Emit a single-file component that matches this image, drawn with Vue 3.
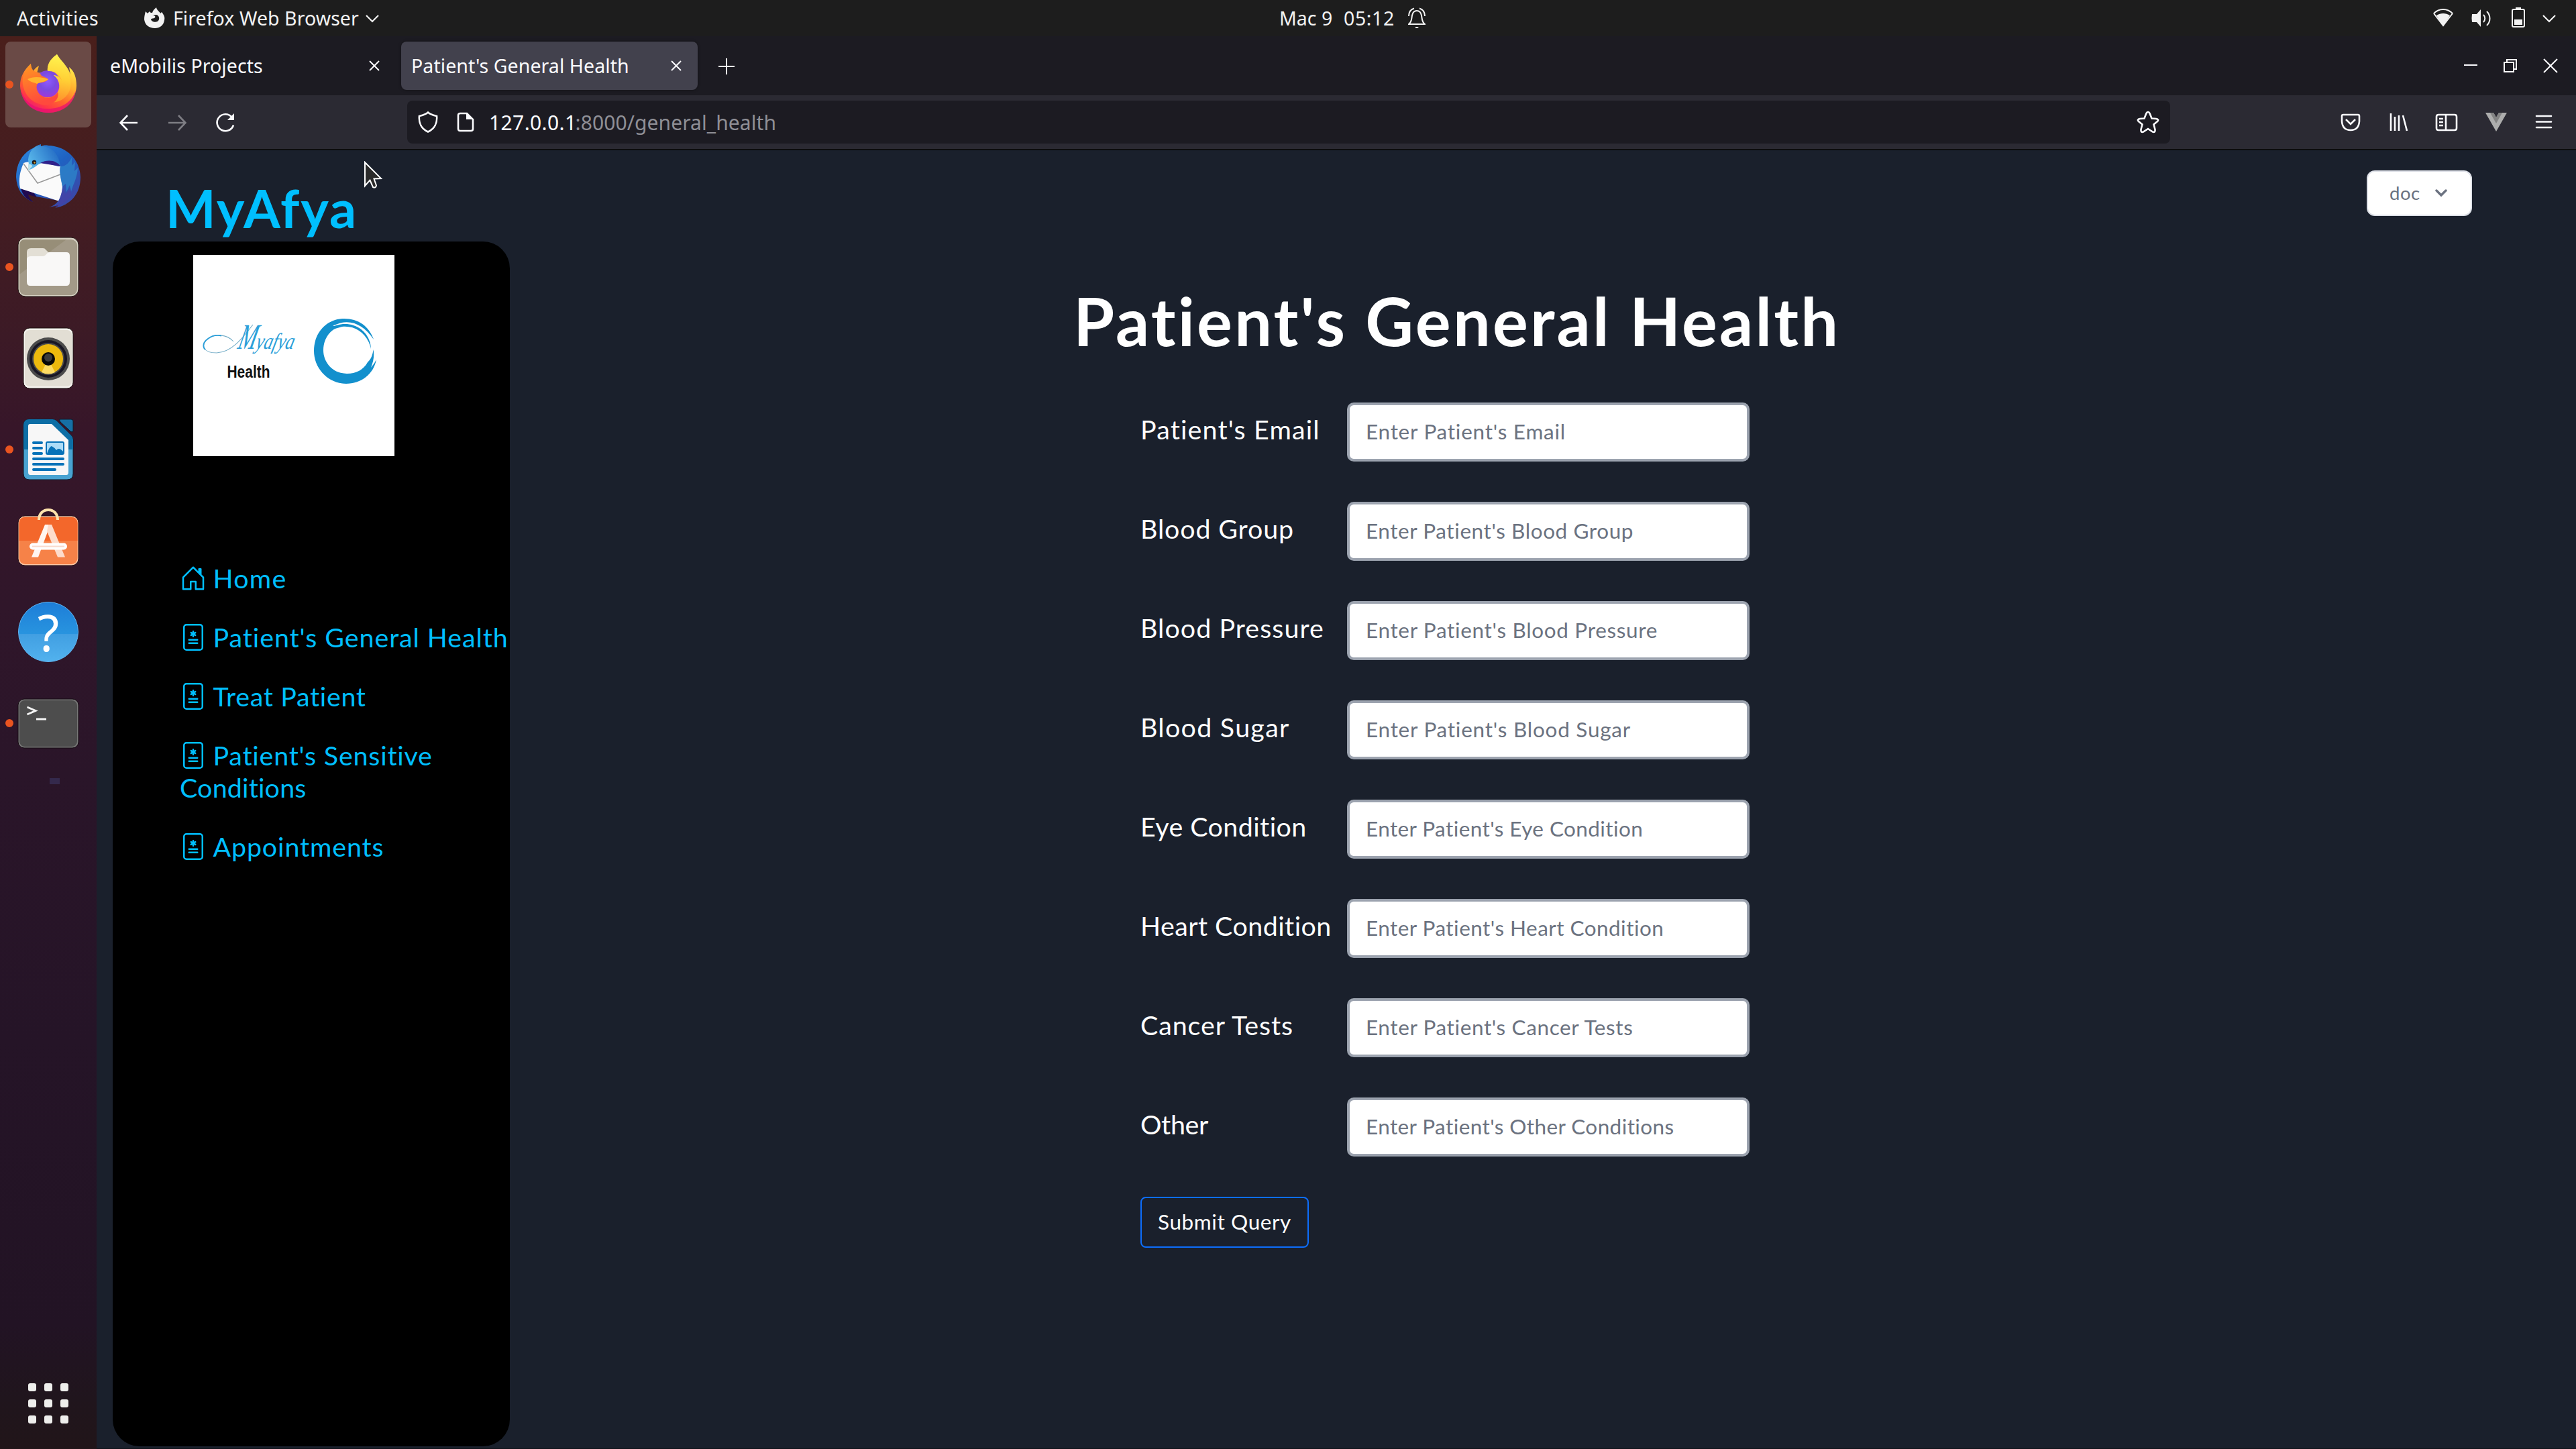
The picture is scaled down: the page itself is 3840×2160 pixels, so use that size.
<script setup>
const fields = [
  { label: "Patient's Email", lw: 262, hint: "Enter Patient's Email", hw: 295 },
  { label: 'Blood Group', lw: 224, hint: "Enter Patient's Blood Group", hw: 397 },
  { label: 'Blood Pressure', lw: 269, hint: "Enter Patient's Blood Pressure", hw: 433 },
  { label: 'Blood Sugar', lw: 219, hint: "Enter Patient's Blood Sugar", hw: 394 },
  { label: 'Eye Condition', lw: 243, hint: "Enter Patient's Eye Condition", hw: 411 },
  { label: 'Heart Condition', lw: 280, hint: "Enter Patient's Heart Condition", hw: 442 },
  { label: 'Cancer Tests', lw: 227, hint: "Enter Patient's Cancer Tests", hw: 398 },
  { label: 'Other', lw: 101, hint: "Enter Patient's Other Conditions", hw: 459 },
]

const links = [
  { icon: 'home', lines: [['Home', 105]] },
  { icon: 'file', lines: [["Patient's General Health", 435]] },
  { icon: 'file', lines: [['Treat Patient', 228]] },
  { icon: 'file', lines: [["Patient's Sensitive", 324], ['Conditions', 187]] },
  { icon: 'file', lines: [['Appointments', 253]] },
]

// Tracks a label out or in so that its ink spans the given width.
const vFit = {
  mounted(el, { value }) {
    const text = el.placeholder || el.textContent.trim()
    const cs = getComputedStyle(el)
    const ctx = document.createElement('canvas').getContext('2d')
    ctx.font = `${cs.fontWeight} ${cs.fontSize} ${cs.fontFamily}`
    const m = ctx.measureText(text)
    const ink = m.actualBoundingBoxLeft + m.actualBoundingBoxRight
    el.style.letterSpacing = `${(value - ink) / (text.length - 1)}px`
  },
}
</script>

<template>
  <div class="screen">
    <header class="topbar">
      <div class="top-left">
        <span v-fit="121" class="activities">Activities</span>
        <svg class="ff-mono" width="34" height="32" viewBox="0 0 34 32">
          <path d="M4 6 L7 9 L10 6 C11 8 12 8 14 8 C15 4 18 2 20 0 C21 5 25 6 26 9 L28 7 C32 12 33 15 32 19 C31 27 25 31 18 31 C9 31 3 26 2 18 C2 13 3 10 4 6 Z M14 12 C18 12 20 14 17 16 C14 17 13 16 12 18 C13 22 22 24 24 18 C25 14 22 11 20 11 Z" fill="#f2f2f2" fill-rule="evenodd" />
        </svg>
        <span v-fit="275">Firefox Web Browser</span>
        <svg class="chev" width="22" height="14" viewBox="0 0 22 14"><path d="M2 2 L11 11 L20 2" /></svg>
      </div>
      <span v-fit="76" class="date">Mac 9</span>
      <span v-fit="73" class="time">05:12</span>
      <svg class="bell" width="26" height="32" viewBox="0 0 26 32" fill="none" stroke="#f2f2f2" stroke-width="2">
        <path d="M1 13 C1 7 4 3 9 1.5 M25 13 C25 7 22 3 17 1.5" />
        <path d="M1 25 C6 21 5 17 6 12 C7 7 9 5 13 5 C17 5 19 7 20 12 C21 17 20 21 25 25 Z" />
        <path d="M10 29 h6 l-2 2 h-2 Z" fill="#f2f2f2" stroke="none" />
      </svg>
      <div class="tray">
        <svg width="30" height="28" viewBox="0 0 30 28">
          <path d="M1 7 C9 -1 21 -1 29 7" fill="none" stroke="#f2f2f2" stroke-width="2" />
          <path d="M1 7 L15 25 L29 7" fill="none" stroke="#f2f2f2" stroke-width="2" />
          <path d="M5 10 C11 6 19 6 25 10 L15 26 Z" fill="#f2f2f2" />
        </svg>
        <svg class="speaker" width="30" height="28" viewBox="0 0 30 28" fill="none" stroke="#f2f2f2" stroke-width="2">
          <path d="M1 8 h7 l6 -7 v26 l-6 -7 h-7 q-1 -6 0 -12 Z" fill="#f2f2f2" stroke="none" />
          <path d="M18 9 C21 12 21 17 18 20 M23 4 C29 10 29 19 23 25" />
        </svg>
        <svg class="battery" width="20" height="32" viewBox="0 0 20 32">
          <path d="M6 1 h8 v2 h-8 Z M4 19 h12 v8 h-12 Z" fill="#f2f2f2" />
          <rect x="1" y="4" width="18" height="26" rx="2" fill="none" stroke="#f2f2f2" stroke-width="2" />
        </svg>
        <svg class="chev tray-chev" width="22" height="14" viewBox="0 0 22 14"><path d="M2 2 L11 11 L20 2" /></svg>
      </div>
    </header>

    <div class="desktop">
      <aside class="dock">
        <div class="slot active running">
          <svg width="96" height="96" viewBox="0 0 96 96">
            <defs>
              <linearGradient id="ffBody" x1="0.8" y1="0.1" x2="0.3" y2="1">
                <stop offset="0" stop-color="#fff44f" /><stop offset="0.35" stop-color="#ffb02e" />
                <stop offset="0.62" stop-color="#ff6a2b" /><stop offset="0.85" stop-color="#ff3647" />
                <stop offset="1" stop-color="#e31587" />
              </linearGradient>
              <radialGradient id="ffGlobe" cx="0.5" cy="0.4" r="0.65">
                <stop offset="0" stop-color="#9059ff" /><stop offset="0.5" stop-color="#7a4be0" /><stop offset="1" stop-color="#a535d8" />
              </radialGradient>
              <linearGradient id="ffHead" x1="0" y1="0" x2="0.3" y2="1">
                <stop offset="0" stop-color="#ff9a1f" /><stop offset="1" stop-color="#ff4a3d" />
              </linearGradient>
              <linearGradient id="ffFlame" x1="0.4" y1="0" x2="0.3" y2="1">
                <stop offset="0" stop-color="#fff44f" /><stop offset="0.5" stop-color="#ffcf35" /><stop offset="1" stop-color="#ff8a2b" />
              </linearGradient>
            </defs>
            <path d="M22 17 C11 27 6 37 6 50 C7 73 25 90 48 90 C71 90 89 74 90 50 C90 38 87 28 79 22 L81 33 C77 20 66 12 61 3 C50 11 46 20 47 29 L31 31 L34 20 C30 22 27 25 26 28 C23 25 22 21 22 17 Z" fill="url(#ffBody)" />
            <path d="M7 56 C14 78 32 85 48 84 C68 84 83 74 89 57 C86 78 70 90 48 90 C26 90 9 76 7 56 Z" fill="#e8106f" opacity="0.75" />
            <ellipse cx="47" cy="47" rx="19" ry="20" fill="url(#ffGlobe)" />
            <path d="M61 3 C49 11 46 20 47 28 C58 27 66 33 68 42 C64 36 60 34 56 34 C66 42 67 55 59 63 C55 68 45 69 38 66 C50 82 76 74 81 53 C83 40 77 25 68 15 C64 11 62 7 61 3 Z" fill="url(#ffFlame)" />
            <path d="M22 17 C22 22 24 26 27 28 C31 30 35 29 38 35 C42 37 46 38 48 40 C46 44 38 45 33 46 C28 50 31 60 38 65 C46 71 58 67 62 59 C66 70 53 81 39 78 C17 74 8 54 10 38 C13 29 17 22 22 17 Z" fill="url(#ffHead)" />
            <path d="M17 40 C25 35 40 37 48 40 C45 44 36 44 31 47 C28 45 22 45 17 40 Z" fill="#ffb52e" />
          </svg>
        </div>
        <div class="slot">
          <svg width="96" height="96" viewBox="0 0 96 96">
            <defs>
              <linearGradient id="tbBlue" x1="0" y1="0" x2="0.8" y2="1">
                <stop offset="0" stop-color="#2d8be0" /><stop offset="0.5" stop-color="#1f62c2" /><stop offset="1" stop-color="#3c45a5" />
              </linearGradient>
              <linearGradient id="tbHead" x1="0" y1="0.6" x2="1" y2="0.2">
                <stop offset="0" stop-color="#58b7ea" /><stop offset="1" stop-color="#1e63c0" />
              </linearGradient>
            </defs>
            <path d="M37 1 C33 3 30 4 27 6 C10 13 0 30 0 50 C1 68 9 80 25 87 C20 82 18 79 17 75 L30 79 L63 85 C60 90 55 93 49 95 C57 94 60 92 63 92 C62 94 60 95 58 96 C81 92 96 75 96 50 C95 23 75 4 48 3 C43 2 40 3 37 4 Z" fill="url(#tbBlue)" />
            <path d="M7 67 C10 77 15 83 25 87 C21 82 19 80 18 76 L31 80 L26 73 Z" fill="#210a50" />
            <path d="M11 29 C20 26 30 27 38 29 L66 33 C64 44 67 50 69 64 C69 72 66 80 63 85.500 L6 67 C3 54 6 41 11 29 Z" fill="#fafafa" />
            <path d="M11 30 L32 59 L66 46" fill="none" stroke="#9a9a9a" stroke-width="1.600" />
            <path d="M37 1 C25 4 19 13 18 24 L20 39 C29 36 31 31 38 29 C48 28 58 34 66 34 C64 18 56 6 40 4 L32 4 Z" fill="url(#tbHead)" />
            <path d="M36 29 C48 22 62 26 66 34 L48 31 Z" fill="#30218a" />
            <path d="M18 31 C21 30 24 32 24 34 L18 41 Z" fill="#bfe3ea" />
            <circle cx="27" cy="28" r="3.200" fill="#17171c" /><circle cx="27.500" cy="28.500" r="1.300" fill="#e0a52d" />
            <path d="M66 34 C76 34 80 26 83 21 L83 33 L88 27 L87 41 L92 36 C91 52 85 60 82 72 L80 62 L75 72 L74 60 L69 64 C67 54 64 44 66 34 Z" fill="#2d83c9" opacity="0.800" />
            <path d="M69 66 L74 75 L81 66 L82 76 L88 66 C84 80 73 90 58 95 C64 88 68 76 69 66 Z" fill="#4a3fa5" opacity="0.600" />
          </svg>
        </div>
        <div class="slot running">
          <svg width="96" height="96" viewBox="0 0 96 96">
            <rect x="3" y="4" width="90" height="88" rx="11" fill="#d6d1c3" stroke="#1c1310" />
            <rect x="5" y="7" width="86" height="83" rx="9" fill="#a39a88" />
            <path d="M5 59 L75 7 H14 Q5 7 5 16 Z" fill="#978e78" />
            <path d="M16 26 Q16 20 22 20 H40 Q43 20 44 22 L48 26 H60 V40 H16 Z" fill="#e3dfd5" />
            <path d="M16 36 Q17 32 22 32 H40 Q43 32 45 29 Q47 26 50 26 H75 Q80 26 80 31 V70 Q80 76 75 76 H21 Q16 76 16 70 Z" fill="#f9f8f7" />
          </svg>
        </div>
        <div class="slot">
          <svg width="96" height="96" viewBox="0 0 96 96">
            <rect x="11" y="3" width="74" height="90" rx="9" fill="#f6f4f0" stroke="#1c1310" />
            <rect x="13" y="6" width="70" height="84" rx="7" fill="#e2ded4" />
            <circle cx="48" cy="49" r="32" fill="#4b4b4b" /><circle cx="48" cy="49" r="28" fill="#191724" />
            <circle cx="48" cy="49" r="24" fill="#4b4b4b" /><circle cx="48" cy="49" r="22" fill="#edb90d" />
            <path d="M48 49 L38 69 Q48 74 58 69 Z" fill="#ffdc63" />
            <circle cx="48" cy="49" r="10" fill="#080808" /><circle cx="48" cy="47" r="6" fill="#3b3b3b" />
          </svg>
        </div>
        <div class="slot running">
          <svg width="96" height="96" viewBox="0 0 96 96">
            <path d="M20 3 H54 Q58 3 61 6 L82 27 Q85 30 85 34 V84 Q85 93 76 93 H20 Q11 93 11 84 V12 Q11 3 20 3 Z" fill="#49a3d1" stroke="#0c1c2a" />
            <path d="M20 3 H54 Q58 3 61 6 L82 27 Q85 30 85 34 V48 H11 V12 Q11 3 20 3 Z" fill="#0d6ea5" />
            <path d="M65 3 H82 Q85 3 85 6 V20 Q85 23 81 21 L66 7 Q64 4 65 3 Z" fill="#1670a5" stroke="#0c1c2a" />
            <path d="M21 10 H53 L78 34 V82 Q78 86 75 86 H21 Q18 86 18 82 V13 Q18 10 21 10 Z" fill="#f7f7f7" />
            <path d="M26 38 H38 M26 46 H38 M26 54 H38 M26 62 H70 M26 70 H70 M26 78 H58" stroke="#0672b8" stroke-width="4" stroke-linecap="round" />
            <rect x="45" y="37" width="26" height="18" rx="2" fill="#acdcf7" stroke="#0672b8" stroke-width="2" />
            <path d="M46 54 Q50 43 53 43 Q57 45 60 49 Q64 44 70 51 V54 Z" fill="#0672b8" />
          </svg>
        </div>
        <div class="slot">
          <svg width="96" height="96" viewBox="0 0 96 96">
            <rect x="3" y="11" width="90" height="74" rx="10" fill="#ffc7a4" stroke="#221018" />
            <rect x="4.500" y="13" width="87" height="70" rx="9" fill="#f68248" />
            <path d="M4.500 48 V22 Q4.500 13 13.500 13 H82.500 Q91.500 13 91.500 22 V48 Z" fill="#f3672b" />
            <path d="M34 17 C34 -3 62 -3 62 17" fill="none" stroke="#ffe3ac" stroke-width="4" />
            <path d="M43 24 H53 L48 32 L33 72.500 H23 Z" fill="#fff5f0" />
            <path d="M53 24 L73 72.500 H62 L46 34 L48 24 Z" fill="#fddccb" />
            <rect x="20" y="51.500" width="56" height="10" rx="5" fill="#fff" />
            <path d="M24 56.500 H72" stroke="#f9d9cc" stroke-width="2" />
          </svg>
        </div>
        <div class="slot">
          <svg class="help" width="96" height="96" viewBox="0 0 96 96">
            <defs>
              <linearGradient id="helpBlue" x1="0" y1="0" x2="0" y2="1">
                <stop offset="0" stop-color="#1d7dd8" /><stop offset="0.53" stop-color="#2894df" />
                <stop offset="0.54" stop-color="#419fe2" /><stop offset="1" stop-color="#52b2ee" />
              </linearGradient>
            </defs>
            <circle cx="48" cy="48" r="44.500" fill="url(#helpBlue)" stroke="#5fb4f2" />
            <text x="48" y="76.500" class="help-mark">?</text>
          </svg>
        </div>
        <div class="slot running">
          <svg width="96" height="96" viewBox="0 0 96 96">
            <rect x="3" y="12" width="90" height="73" rx="9" fill="#777" stroke="#150c12" />
            <rect x="5" y="14" width="86" height="69" rx="8" fill="#4d4d4d" />
            <path d="M16.500 24 L29 29.500 L16.500 35 M30 42 H45" fill="none" stroke="#f5f5f5" stroke-width="3" />
          </svg>
        </div>
        <div class="fragment"></div>
        <div class="apps"><i v-for="n in 9" :key="n"></i></div>
      </aside>

      <section class="window">
        <div class="tabs">
          <div class="tab first">
            <span v-fit="226">eMobilis Projects</span>
            <svg width="16" height="16" viewBox="0 0 16 16"><path d="M1 1 L15 15 M15 1 L1 15" /></svg>
          </div>
          <div class="tab current">
            <span v-fit="321">Patient's General Health</span>
            <svg width="16" height="16" viewBox="0 0 16 16"><path d="M1 1 L15 15 M15 1 L1 15" /></svg>
          </div>
          <svg class="plus" width="26" height="26" viewBox="0 0 26 26"><path d="M13 1 V25 M1 13 H25" /></svg>
          <div class="controls">
            <svg width="20" height="22" viewBox="0 0 20 22"><path d="M0 10 H20" /></svg>
            <svg width="20" height="22" viewBox="0 0 20 22"><path d="M1 6 H15 V20 H1 Z M5 5 V2 H19 V16 H16" /></svg>
            <svg width="22" height="22" viewBox="0 0 22 22"><path d="M1 1 L21 21 M21 1 L1 21" /></svg>
          </div>
        </div>

        <div class="toolbar">
          <svg class="back" width="28" height="28" viewBox="0 0 28 28"><path d="M27 14 H2 M12 3 L1.500 14 L12 25" /></svg>
          <svg class="forward" width="28" height="28" viewBox="0 0 28 28"><path d="M1 14 H26 M16 3 L26.500 14 L16 25" /></svg>
          <svg class="reload" width="30" height="30" viewBox="0 0 30 30">
            <path d="M24.500 6.500 A12.500 12.500 0 1 0 27 18.500" /><path d="M28 1 V11 H18 Z" fill="#fbfbfe" stroke="none" />
          </svg>
          <div class="url">
            <svg width="30" height="32" viewBox="0 0 30 32"><path d="M15 1.500 C19 5 24 6 28 7 C29 17 25 26 15 30.500 C5 26 1 17 2 7 C6 6 11 5 15 1.500 Z" /></svg>
            <svg class="doc-icon" width="26" height="30" viewBox="0 0 26 30">
              <path d="M5 2 H15 L24 11 V25 Q24 28 21 28 H5 Q2 28 2 25 V5 Q2 2 5 2 Z" /><path d="M14 1 L25 11 H14 Z" fill="#fbfbfe" stroke="none" />
            </svg>
            <span v-fit="122" class="host">127.0.0.1</span>
            <span v-fit="296" class="path">:8000/general_health</span>
            <svg class="star" width="34" height="34" viewBox="0 0 34 34">
              <path d="M17 2 Q19 2 20 5 L22.500 11.500 L29 12 Q34 13 31 16 L25.500 20.500 L27.500 28 Q28 33 24 31.500 L17 27 L10 31.500 Q6 33 6.500 28 L8.500 20.500 L3 16 Q0 13 5 12 L11.500 11.500 L14 5 Q15 2 17 2 Z" />
            </svg>
          </div>
          <div class="actions">
            <svg width="32" height="32" viewBox="0 0 32 32"><path d="M5 5 H27 Q29 5 29 7 V15 Q28 28 16 28 Q4 28 3 15 V7 Q3 5 5 5 Z M9 12 L16 19 L23 12" /></svg>
            <svg width="32" height="32" viewBox="0 0 32 32"><path d="M4 3 V29 M10 8 V29 M16 6 V29 M22 6 L28 29" /></svg>
            <svg width="34" height="32" viewBox="0 0 34 32"><path d="M5 5 H29 Q32 5 32 8 V25 Q32 28 29 28 H5 Q2 28 2 25 V8 Q2 5 5 5 Z M16 5 V28 M6 11 H12 M6 16 H12 M6 21 H12" /></svg>
            <svg width="32" height="32" viewBox="0 0 32 32">
              <path d="M0 2 L16 30 L32 2 H20 L16 9 L12 2 Z" fill="#adadad" stroke="none" /><path d="M7 2 H12 L16 9 L20 2 H25 L16 18 Z" fill="#828282" stroke="none" />
            </svg>
            <svg width="26" height="32" viewBox="0 0 26 32"><path d="M2 7 H24 M2 15.500 H24 M2 24 H24" stroke-linecap="round" /></svg>
          </div>
        </div>

        <main class="page">
          <div class="page-head">
            <span v-fit="274" class="brand">MyAfya</span>
            <button class="user">
              <span v-fit="44">doc</span>
              <svg width="18" height="12" viewBox="0 0 18 12"><path d="M2 2 L9 9 L16 2" fill="none" stroke="#6b7280" stroke-width="3.400" stroke-linecap="round" /></svg>
            </button>
          </div>

          <div class="columns">
            <nav class="panel">
              <svg class="logo" width="300" height="300" viewBox="0 0 300 300">
                <rect width="300" height="300" fill="#fff" />
                <path d="M60 129 C50 118 32 117 22 125 C11 134 14 146 35 146 C57 145 72 126 89 104" fill="none" stroke="#76aec8" stroke-width="1.100" />
                <path d="M42 120.500 C34 119 27 121 22 125 C14 130 14 138 18 141" fill="none" stroke="#2b9fd9" stroke-width="1.800" />
                <text transform="translate(65 140) skewX(-14)" class="script"><tspan class="script-cap" textLength="27" lengthAdjust="spacingAndGlyphs">M</tspan><tspan textLength="57" lengthAdjust="spacingAndGlyphs">yafya</tspan></text>
                <text x="50.500" y="183" class="health" textLength="64" lengthAdjust="spacingAndGlyphs">Health</text>
                <path d="M269 126 C262 106 246 95 225 95 C200 95 180 115 180 143 C180 170 202 192 228 192 C250 192 269 178 273 156 C271 160 269 163 265 168 C269 158 270 150 268.600 141 C267 152 264 156 260 160 C254 171 243 177 229 177 C209 177 194 161 194 142 C194 124 205 110 220 106.500 L208 106 C230 94 252 101 269 126 Z" fill="#1390cd" />
                <path d="M208 107 C236 95 264 112 265 140 C260 118 243 105 222 107 L208 111 Z" fill="#1390cd" />
              </svg>
              <ul>
                <li v-for="l in links" :key="l.lines[0][0]">
                  <svg width="40" height="40" viewBox="0 0 16 16" fill="#00bfff">
                    <path v-if="l.icon === 'home'" d="M8.354 1.146a.5.5 0 0 0-.708 0l-6 6A.5.5 0 0 0 1.500 7.500v7a.5.5 0 0 0 .5.5h4.500a.5.5 0 0 0 .5-.5v-4h2v4a.5.5 0 0 0 .5.5H14a.5.5 0 0 0 .5-.5v-7a.5.5 0 0 0-.146-.354L13 5.793V2.500a.5.5 0 0 0-.5-.5h-1a.5.5 0 0 0-.5.5v1.293L8.354 1.146zM2.500 14V7.707l5.500-5.500 5.500 5.500V14H10v-4a.5.5 0 0 0-.5-.5h-3a.5.5 0 0 0-.5.5v4H2.500z" />
                    <template v-else>
                      <path d="M8.500 4.500a.5.5 0 0 0-1 0v.634l-.549-.317a.5.5 0 1 0-.5.866L7 6l-.549.317a.5.5 0 1 0 .5.866l.549-.317V7.500a.5.5 0 1 0 1 0v-.634l.549.317a.5.5 0 1 0 .5-.866L9 6l.549-.317a.5.5 0 1 0-.5-.866l-.549.317V4.500zM5.500 9a.5.5 0 0 0 0 1h5a.5.5 0 0 0 0-1h-5zm0 2a.5.5 0 0 0 0 1h5a.5.5 0 0 0 0-1h-5z" />
                      <path d="M2 2a2 2 0 0 1 2-2h8a2 2 0 0 1 2 2v12a2 2 0 0 1-2 2H4a2 2 0 0 1-2-2V2zm10-1H4a1 1 0 0 0-1 1v12a1 1 0 0 0 1 1h8a1 1 0 0 0 1-1V2a1 1 0 0 0-1-1z" />
                    </template>
                  </svg>
                  <template v-for="(line, i) in l.lines" :key="i">
                    <br v-if="i" /><span v-fit="line[1]">{{ line[0] }}</span>
                  </template>
                </li>
              </ul>
            </nav>

            <div class="content">
              <h1><span v-fit="1130">Patient's General Health</span></h1>
              <form @submit.prevent>
                <label v-for="f in fields" :key="f.label" class="row">
                  <span class="name"><span v-fit="f.lw">{{ f.label }}</span></span>
                  <input v-fit="f.hw" type="text" :placeholder="f.hint" />
                </label>
                <button class="submit"><span v-fit="197">Submit Query</span></button>
              </form>
            </div>
          </div>
        </main>
      </section>
    </div>

    <svg class="cursor" width="30" height="44" viewBox="0 0 30 44">
      <path d="M2 2 V37 L9.500 28.500 L14 39 Q18 41 19 36.500 L15.500 26.500 L26 26 Z" fill="#2b2b2b" stroke="#fff" stroke-width="2" />
    </svg>
  </div>
</template>

<style>
body {
  background: #1a202c;
  overflow: hidden;
}
</style>

<style scoped>
* {
  box-sizing: border-box;
}
.screen {
  position: relative;
  display: flex;
  flex-direction: column;
  width: 3840px;
  height: 2160px;
  overflow: hidden;
  background: #1a202c;
  font-family: 'Noto Sans', 'Open Sans', sans-serif;
  font-size: 28.5px;
  color: #f2f2f2;
}
svg {
  display: block;
  flex: none;
}
span {
  white-space: nowrap;
}

/* system bar */
.topbar {
  display: flex;
  align-items: center;
  height: 54px;
  line-height: 54px;
  background: #1d1d1d;
}
.top-left {
  display: flex;
  align-items: center;
  width: 1907px;
  padding-left: 25px;
}
.activities {
  width: 188px;
}
.ff-mono {
  width: 34px;
  margin-right: 11px;
}
.chev {
  margin-left: 9px;
  margin-top: 2px;
}
.chev path {
  fill: none;
  stroke: #f2f2f2;
  stroke-width: 2.2;
}
.date,
.time {
  width: 96px;
}
.bell {
  margin-left: 0;
}
.tray {
  display: flex;
  align-items: center;
  margin-left: auto;
  padding-right: 29px;
}
.speaker {
  margin-left: 27px;
}
.battery {
  margin-left: 30px;
  margin-top: -2px;
}
.tray-chev {
  margin-left: 25px;
}

/* launcher */
.desktop {
  display: flex;
  height: 2106px;
}
.dock {
  display: flex;
  flex-direction: column;
  align-items: center;
  width: 144px;
  padding-top: 4px;
  background: linear-gradient(#4a1f1b 0, #451d20 200px, #3c1a26 450px, #371629 580px, #30162a 850px, #2a1529 1100px, #251427 1500px, #221324 1920px, #20151d 2030px, #211519 100%);
}
.slot {
  position: relative;
  display: flex;
  align-items: center;
  justify-content: center;
  width: 128px;
  height: 128px;
  margin: 4px 0;
  border-radius: 8px;
}
.slot.active {
  background: #6a4a46;
}
.slot.running::before {
  content: '';
  position: absolute;
  left: 0;
  top: 58px;
  width: 12px;
  height: 12px;
  border-radius: 50%;
  background: #e95420;
}
.help {
  overflow: visible;
}
.help-mark {
  font-family: 'Noto Sans', sans-serif;
  font-size: 74px;
  text-anchor: middle;
  fill: #fff;
}
.fragment {
  width: 15px;
  height: 9px;
  margin: 14px 0 0 19px;
  background: #34294c;
}
.apps {
  display: grid;
  grid-template-columns: repeat(3, 12px);
  gap: 12px;
  margin-top: auto;
  margin-bottom: 38px;
}
.apps i {
  width: 12px;
  height: 12px;
  border-radius: 3px;
  background: #eeeeec;
}

/* browser chrome */
.window {
  display: flex;
  flex-direction: column;
  width: 3696px;
}
.tabs {
  display: flex;
  align-items: center;
  height: 88px;
  background: #1c1b22;
  color: #fbfbfe;
}
.tabs svg,
.toolbar svg {
  fill: none;
  stroke: #fbfbfe;
  stroke-width: 2;
}
.tab {
  display: flex;
  align-items: center;
  justify-content: space-between;
  height: 72px;
  border-radius: 8px;
}
.tab span {
  padding-bottom: 1px;
}
.tab.first {
  width: 454px;
  padding: 0 32px 0 20px;
}
.tab.current {
  width: 442px;
  padding: 0 24px 0 15px;
  background: #42414d;
  box-shadow: 0 0 4px rgba(0, 0, 0, 0.4);
}
.plus {
  margin-left: 30px;
  margin-top: 2px;
}
.controls {
  display: flex;
  gap: 39px;
  margin-left: auto;
  padding-right: 27px;
}
.toolbar {
  display: flex;
  align-items: center;
  height: 82px;
  padding-bottom: 2px;
  background: #2b2a33;
  border-bottom: 2px solid #0c0c0d;
}
.back {
  margin-left: 34px;
  margin-top: 3px;
}
.toolbar svg {
  stroke-width: 2.6;
}
.forward {
  margin-left: 44px;
  margin-top: 3px;
  opacity: 0.4;
}
.reload {
  margin-left: 43px;
  margin-top: 3px;
}
.url {
  display: flex;
  align-items: center;
  width: 2628px;
  height: 64px;
  margin: 2px 0 0 256px;
  padding: 0 16px 0 16px;
  border-radius: 8px;
  background: #1c1b22;
  color: #fbfbfe;
  font-size: 30px;
}
.doc-icon {
  margin-left: 28px;
  margin-right: 22px;
}
.url span {
  padding-top: 0;
}
.path {
  margin-left: -2px;
  color: #8f8f96;
}
.star {
  margin-left: auto;
}
.actions {
  display: flex;
  align-items: center;
  gap: 41px;
  margin-left: auto;
  margin-top: 2px;
  padding-right: 35px;
}
.actions svg:nth-child(1) {
  margin-right: -1px;
}
.actions svg:nth-child(2) {
  margin-right: -3px;
}
.actions svg:nth-child(5) {
  margin-left: 1px;
}

/* page */
.page {
  flex: 1;
  background: #1a202c;
  border-bottom: 1px solid #0f1219;
  font-family: Lato, 'Noto Sans', sans-serif;
}
.page-head {
  display: flex;
  justify-content: space-between;
  align-items: flex-start;
  height: 136px;
  padding: 0 155px 0 103px;
}
.brand {
  margin-top: 36px;
  font-size: 79px;
  font-weight: 700;
  line-height: 100px;
  color: #00bfff;
}
.user {
  display: flex;
  align-items: center;
  gap: 22px;
  width: 157px;
  height: 68px;
  margin-top: 30px;
  padding: 0 0 2px 32px;
  border: 2px solid #dcdfe6;
  border-radius: 12px;
  background: #fff;
  color: #6b7280;
  font-family: inherit;
  font-size: 27.5px;
}
.user svg {
  margin-top: 2px;
}
.columns {
  display: flex;
  padding-left: 24px;
}
.panel {
  width: 592px;
  height: 1796px;
  padding-top: 20px;
  border-radius: 40px;
  background: #000;
}
.logo {
  margin-left: 120px;
}
.script {
  font-family: 'Liberation Serif', serif;
  font-style: italic;
  font-size: 34px;
  fill: #2b9fd9;
}
.script-cap {
  font-size: 54px;
}
.health {
  font-family: 'Liberation Sans', sans-serif;
  font-weight: 700;
  font-size: 25px;
  fill: #111;
}
ul {
  display: flex;
  flex-direction: column;
  gap: 40px;
  margin: 158px 0 0;
  padding: 0 0 0 100px;
  list-style: none;
  font-size: 39.4px;
  line-height: 48px;
  color: #00bfff;
}
li svg {
  display: inline-block;
  margin-right: 9.5px;
  vertical-align: -5px;
}
.content {
  padding-left: 840px;
}
h1 {
  margin: 58px 0 0;
  font-size: 99px;
  font-weight: 700;
  line-height: 120px;
  color: #fff;
}
form {
  display: flex;
  flex-direction: column;
  align-items: flex-start;
  gap: 60px;
  margin: 62px 0 0 100px;
}
.row {
  display: flex;
  align-items: center;
  height: 88px;
  color: #fff;
}
.name {
  width: 308px;
  padding-bottom: 9px;
  font-size: 39.4px;
}
input {
  width: 600px;
  height: 88px;
  margin: 0;
  padding: 0 24px 2px;
  border: 4px solid #9ca3af;
  border-radius: 10px;
  background: #fff;
  font-family: inherit;
  font-size: 31.5px;
}
input::placeholder {
  color: #6b7280;
  opacity: 1;
}
.submit {
  width: 251px;
  height: 76px;
  padding: 0 0 2px;
  border: 2px solid #0d6efd;
  border-radius: 8px;
  background: transparent;
  color: #fff;
  font-family: inherit;
  font-size: 31.5px;
}
.cursor {
  position: absolute;
  left: 542px;
  top: 240px;
}
</style>
